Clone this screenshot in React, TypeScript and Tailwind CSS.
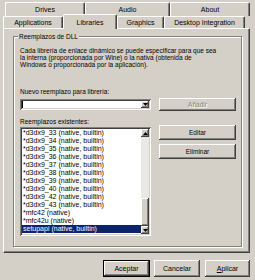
import React from 'react';

const raised =
  'bg-[#d4d0c8] shadow-[inset_-1px_-1px_#404040,inset_1px_1px_#fff,inset_-2px_-2px_#808080,inset_2px_2px_#d4d0c8]';
const sunken =
  'bg-white shadow-[inset_1px_1px_#808080,inset_-1px_-1px_#fff,inset_2px_2px_#404040,inset_-2px_-2px_#d4d0c8]';

function Tab({label, w, selected}: {label: string; w: string; selected?: boolean}) {
  if (selected) {
    return (
      <div
        className={`${w} relative z-10 -mt-[2px] h-[15px] flex items-center justify-center rounded-t-[2px] border-l border-t border-white border-r border-r-[#404040] bg-[#d4d0c8] shadow-[inset_-1px_0_#808080] text-[7px]`}
      >
        {label}
      </div>
    );
  }
  return (
    <div
      className={`${w} h-full flex items-center justify-center rounded-t-[2px] border-l border-t border-white border-r border-r-[#404040] shadow-[inset_-1px_0_#808080] text-[7px]`}
    >
      {label}
    </div>
  );
}

function Arrow({up}: {up?: boolean}) {
  return (
    <svg width="5" height="3" viewBox="0 0 5 3">
      <path d={up ? 'M2.5 0L5 3H0Z' : 'M0 0H5L2.5 3Z'} fill="#000" />
    </svg>
  );
}

const items = [
  '*d3dx9_33 (native, builtin)',
  '*d3dx9_34 (native, builtin)',
  '*d3dx9_35 (native, builtin)',
  '*d3dx9_36 (native, builtin)',
  '*d3dx9_37 (native, builtin)',
  '*d3dx9_38 (native, builtin)',
  '*d3dx9_39 (native, builtin)',
  '*d3dx9_40 (native, builtin)',
  '*d3dx9_42 (native, builtin)',
  '*d3dx9_43 (native, builtin)',
  '*mfc42 (native)',
  '*mfc42u (native)',
  'setupapi (native, builtin)',
];

export default function App() {
  return (
    <div className="w-[255px] h-[280px] overflow-hidden bg-[#d4d0c8] text-black text-[6.5px] leading-[7px] font-['Liberation_Sans',Arial,sans-serif]">
      {/* tab rows */}
      <div className="flex h-[16px] pt-[2px] pl-[5px]">
        <Tab label="Drives" w="w-[80px]" />
        <Tab label="Audio" w="w-[85px]" />
        <Tab label="About" w="w-[80px]" />
      </div>
      <div className="flex h-[12px] pl-[3px]">
        <Tab label="Applications" w="w-[60px]" />
        <Tab label="Libraries" w="w-[54px]" selected />
        <Tab label="Graphics" w="w-[47px]" />
        <Tab label="Desktop Integration" w="w-[81px]" />
      </div>

      {/* tab panel */}
      <div className="mx-[3px] h-[225px] w-[247px] border-l border-t border-white border-r border-b border-r-[#404040] border-b-[#404040] shadow-[inset_-1px_-1px_#808080] pt-[7px] pl-[9px]">
        <div className="relative w-[229px] h-[211px] border border-[#808080] shadow-[1px_1px_0_#fff,inset_1px_1px_0_#fff] pl-[6px]">
          <span className="absolute left-[4px] -top-[4px] px-[1px] bg-[#d4d0c8]">Reemplazos de DLL</span>

          <div className="pt-[10px]">
            <div>Cada librería de enlace dinámico se puede especificar para que sea</div>
            <div>la interna (proporcionada por Wine) o la nativa (obtenida de</div>
            <div>Windows o proporcionada por la aplicación).</div>
          </div>

          <div className="mt-[20px]">Nuevo reemplazo para librería:</div>
          <div className="mt-[3px] flex items-center h-[13px]">
            <div className={`w-[131px] h-[11px] ${sunken} flex items-center p-[2px]`}>
              <span className="w-px h-[7px] bg-black" />
              <span className="flex-1" />
              <div className={`w-[8px] h-[7px] ${raised} flex items-center justify-center`}>
                <Arrow />
              </div>
            </div>
            <div
              className={`ml-[8px] w-[77px] h-[13px] ${raised} flex items-center justify-center text-[#808080] [text-shadow:1px_1px_0_#fff]`}
            >
              Añadir
            </div>
          </div>

          <div className="mt-[7px]">Reemplazos existentes:</div>
          <div className="mt-[2px] flex items-start">
            <div className={`w-[131px] h-[109px] ${sunken} p-[2px] flex`}>
              <div className="flex-1 text-[7px] leading-[8px]">
                {items.map((it, i) => (
                  <div
                    key={it}
                    className={i === items.length - 1 ? 'h-[8px] pl-px bg-[#0a246a] text-white' : 'h-[8px] pl-px'}
                  >
                    {it}
                  </div>
                ))}
              </div>
              <div className="w-[8px] h-full flex flex-col bg-[#ebe9e5]">
                <div className={`h-[8px] ${raised} flex items-center justify-center`}>
                  <Arrow up />
                </div>
                <div className="flex-1 flex flex-col justify-end">
                  <div className={`h-[28px] ${raised}`} />
                </div>
                <div className={`h-[8px] ${raised} flex items-center justify-center`}>
                  <Arrow />
                </div>
              </div>
            </div>
            <div className="ml-[8px] -mt-[2px] flex flex-col gap-[4px]">
              <div className={`w-[77px] h-[15px] ${raised} flex items-center justify-center`}>Editar</div>
              <div className={`w-[77px] h-[15px] ${raised} flex items-center justify-center`}>Eliminar</div>
            </div>
          </div>
        </div>
      </div>

      {/* dialog buttons */}
      <div className="flex justify-end pr-[5px] pt-[7px] text-[7px]">
        <div className={`w-[47px] h-[17px] border border-black ${raised} flex items-center justify-center`}>Aceptar</div>
        <div className={`ml-[4px] w-[46px] h-[17px] ${raised} flex items-center justify-center`}>Cancelar</div>
        <div className={`ml-[5px] w-[45px] h-[17px] ${raised} flex items-center justify-center`}>
          <span>
            <span className="underline">A</span>plicar
          </span>
        </div>
      </div>
    </div>
  );
}
